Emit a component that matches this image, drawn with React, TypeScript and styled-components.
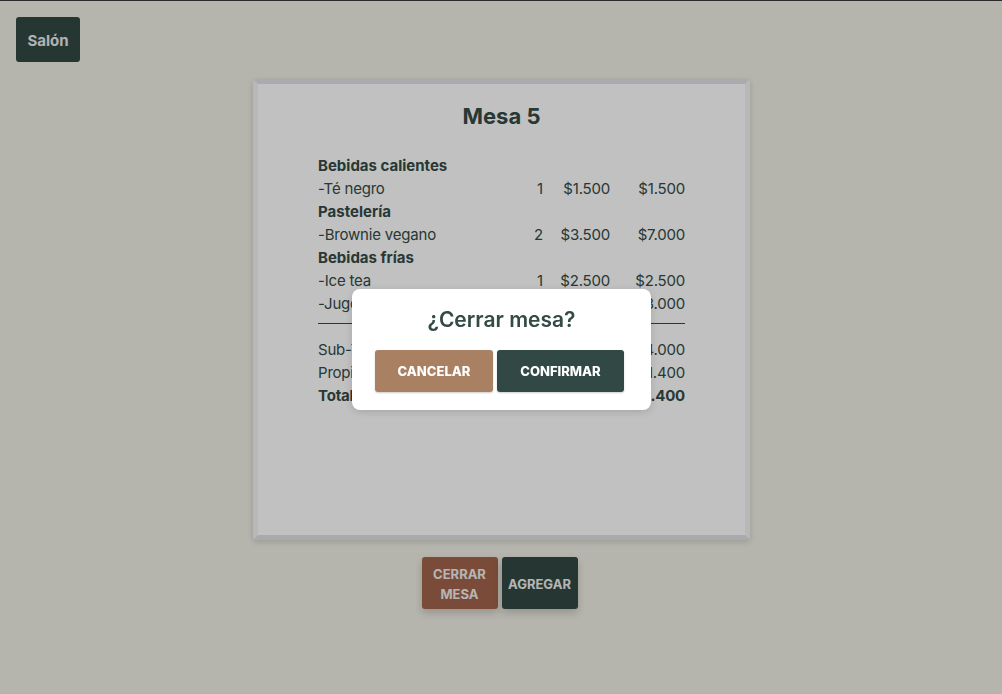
import React from "react";
import styled, { createGlobalStyle } from "styled-components";

const Global = createGlobalStyle`
  html, body { margin: 0; padding: 0; }
  body {
    font-family: Inter, "Noto Sans", sans-serif;
    background: #f0f0e6;
    color: #344a46;
  }
`;

const Page = styled.div`
  min-height: 694px;
  box-sizing: border-box;
  border-top: 1px solid #3a3a3a;
  padding: 16px 16px 40px;
  display: flex;
  flex-direction: column;
`;

const TopBar = styled.div`
  display: flex;
`;

const Button = styled.button<{ $tone: "green" | "brown" | "tan"; $w?: number; $h?: number }>`
  font-family: Inter, "Noto Sans", sans-serif;
  font-weight: 700;
  border: none;
  border-radius: 3px;
  cursor: pointer;
  background: ${(p) => (p.$tone === "green" ? "#324844" : p.$tone === "brown" ? "#a2634a" : "#aa8062")};
  color: #f8f8f8;
  width: ${(p) => (p.$w ? `${p.$w}px` : "auto")};
  height: ${(p) => (p.$h ? `${p.$h}px` : "auto")};
  padding: 0;
  line-height: 20px;
`;

const SalonButton = styled(Button)`
  font-size: 15px;
  color: #ececec;
  padding-top: 3px;
`;

const ActionButton = styled(Button)`
  font-size: 13px;
  text-transform: uppercase;
  color: #f0f0f0;
  box-shadow: 0 4px 8px rgba(0, 0, 0, 0.18);
  padding-top: 2px;
`;

const Center = styled.div`
  display: flex;
  flex-direction: column;
  align-items: center;
  margin-top: 17px;
`;

const Card = styled.div`
  box-sizing: border-box;
  width: 497px;
  height: 461px;
  margin-left: 1px;
  background: #ffffff;
  border-style: solid;
  border-width: 5px;
  border-color: #e2e2e8 #f3f3f6 #e0e0e6 #f3f3f6;
  border-radius: 3px;
  box-shadow: 0 2px 6px rgba(0, 0, 0, 0.15);
  padding: 16px 60px;
`;

const Title = styled.h1`
  margin: 0;
  text-align: center;
  font-size: 22px;
  font-weight: 700;
  line-height: 32px;
  margin-bottom: 22px;
`;

const Rows = styled.div`
  display: grid;
  grid-template-columns: 1fr 40px 67px 75px;
  font-size: 15px;
  line-height: 23px;
  letter-spacing: -0.2px;
`;

const Category = styled.div`
  grid-column: 1 / -1;
  font-weight: 650;
  letter-spacing: 0;
`;

const Cell = styled.div<{ $right?: boolean; $bold?: boolean }>`
  text-align: ${(p) => (p.$right ? "right" : "left")};
  font-weight: ${(p) => (p.$bold ? 700 : 400)};
  white-space: nowrap;
`;

const Divider = styled.div`
  grid-column: 1 / -1;
  height: 1px;
  background: #344a46;
  margin: 8px 0 14px;
`;

const SummaryLabel = styled(Cell)`
  grid-column: 1 / 4;
`;

const Actions = styled.div`
  display: flex;
  gap: 4px;
  margin-top: 17px;
  margin-right: 3px;
`;

const Overlay = styled.div`
  position: fixed;
  inset: 0;
  background: rgba(0, 0, 0, 0.245);
  display: flex;
  justify-content: center;
  align-items: flex-start;
  padding-top: 289px;
  box-sizing: border-box;
`;

const Modal = styled.div`
  width: 299px;
  height: 121px;
  box-sizing: border-box;
  margin-left: 1px;
  background: #ffffff;
  border-radius: 8px;
  box-shadow: 0 2px 8px rgba(0, 0, 0, 0.15);
  display: flex;
  flex-direction: column;
  align-items: center;
  padding-top: 16px;
`;

const ModalTitle = styled.h2`
  margin: 0;
  font-size: 21px;
  font-weight: 600;
  line-height: 30px;
  color: #344a46;
`;

const ModalActions = styled.div`
  display: flex;
  gap: 4px;
  margin-top: 15px;
  margin-right: 4px;
`;

const ModalButton = styled(Button)`
  font-size: 13px;
  font-weight: 800;
  color: #ffffff;
  text-transform: uppercase;
  box-shadow: 0 1px 2px rgba(0, 0, 0, 0.2);
`;

type Item = { name: string; qty: number; unit: string; total: string };
const groups: { cat: string; items: Item[] }[] = [
  { cat: "Bebidas calientes", items: [{ name: "-Té negro", qty: 1, unit: "$1.500", total: "$1.500" }] },
  { cat: "Pastelería", items: [{ name: "-Brownie vegano", qty: 2, unit: "$3.500", total: "$7.000" }] },
  {
    cat: "Bebidas frías",
    items: [
      { name: "-Ice tea", qty: 1, unit: "$2.500", total: "$2.500" },
      { name: "-Jugo natural", qty: 1, unit: "$3.000", total: "$3.000" },
    ],
  },
];

export default function App() {
  return (
    <>
      <Global />
      <Page>
        <TopBar>
          <SalonButton $tone="green" $w={64} $h={45}>
            Salón
          </SalonButton>
        </TopBar>
        <Center>
          <Card>
            <Title>Mesa 5</Title>
            <Rows>
              {groups.map((g) => (
                <React.Fragment key={g.cat}>
                  <Category>{g.cat}</Category>
                  {g.items.map((it) => (
                    <React.Fragment key={it.name}>
                      <Cell>{it.name}</Cell>
                      <Cell $right>{it.qty}</Cell>
                      <Cell $right>{it.unit}</Cell>
                      <Cell $right>{it.total}</Cell>
                    </React.Fragment>
                  ))}
                </React.Fragment>
              ))}
              <Divider />
              <SummaryLabel>Sub-Total</SummaryLabel>
              <Cell $right>$14.000</Cell>
              <SummaryLabel>Propina</SummaryLabel>
              <Cell $right>$1.400</Cell>
              <SummaryLabel $bold>Total</SummaryLabel>
              <Cell $right $bold>
                $15.400
              </Cell>
            </Rows>
          </Card>
          <Actions>
            <ActionButton $tone="brown" $w={76} $h={52}>
              Cerrar
              <br />
              mesa
            </ActionButton>
            <ActionButton $tone="green" $w={76} $h={52}>
              Agregar
            </ActionButton>
          </Actions>
        </Center>
      </Page>
      <Overlay>
        <Modal>
          <ModalTitle>¿Cerrar mesa?</ModalTitle>
          <ModalActions>
            <ModalButton $tone="tan" $w={118} $h={42}>
              Cancelar
            </ModalButton>
            <ModalButton $tone="green" $w={127} $h={42}>
              Confirmar
            </ModalButton>
          </ModalActions>
        </Modal>
      </Overlay>
    </>
  );
}
